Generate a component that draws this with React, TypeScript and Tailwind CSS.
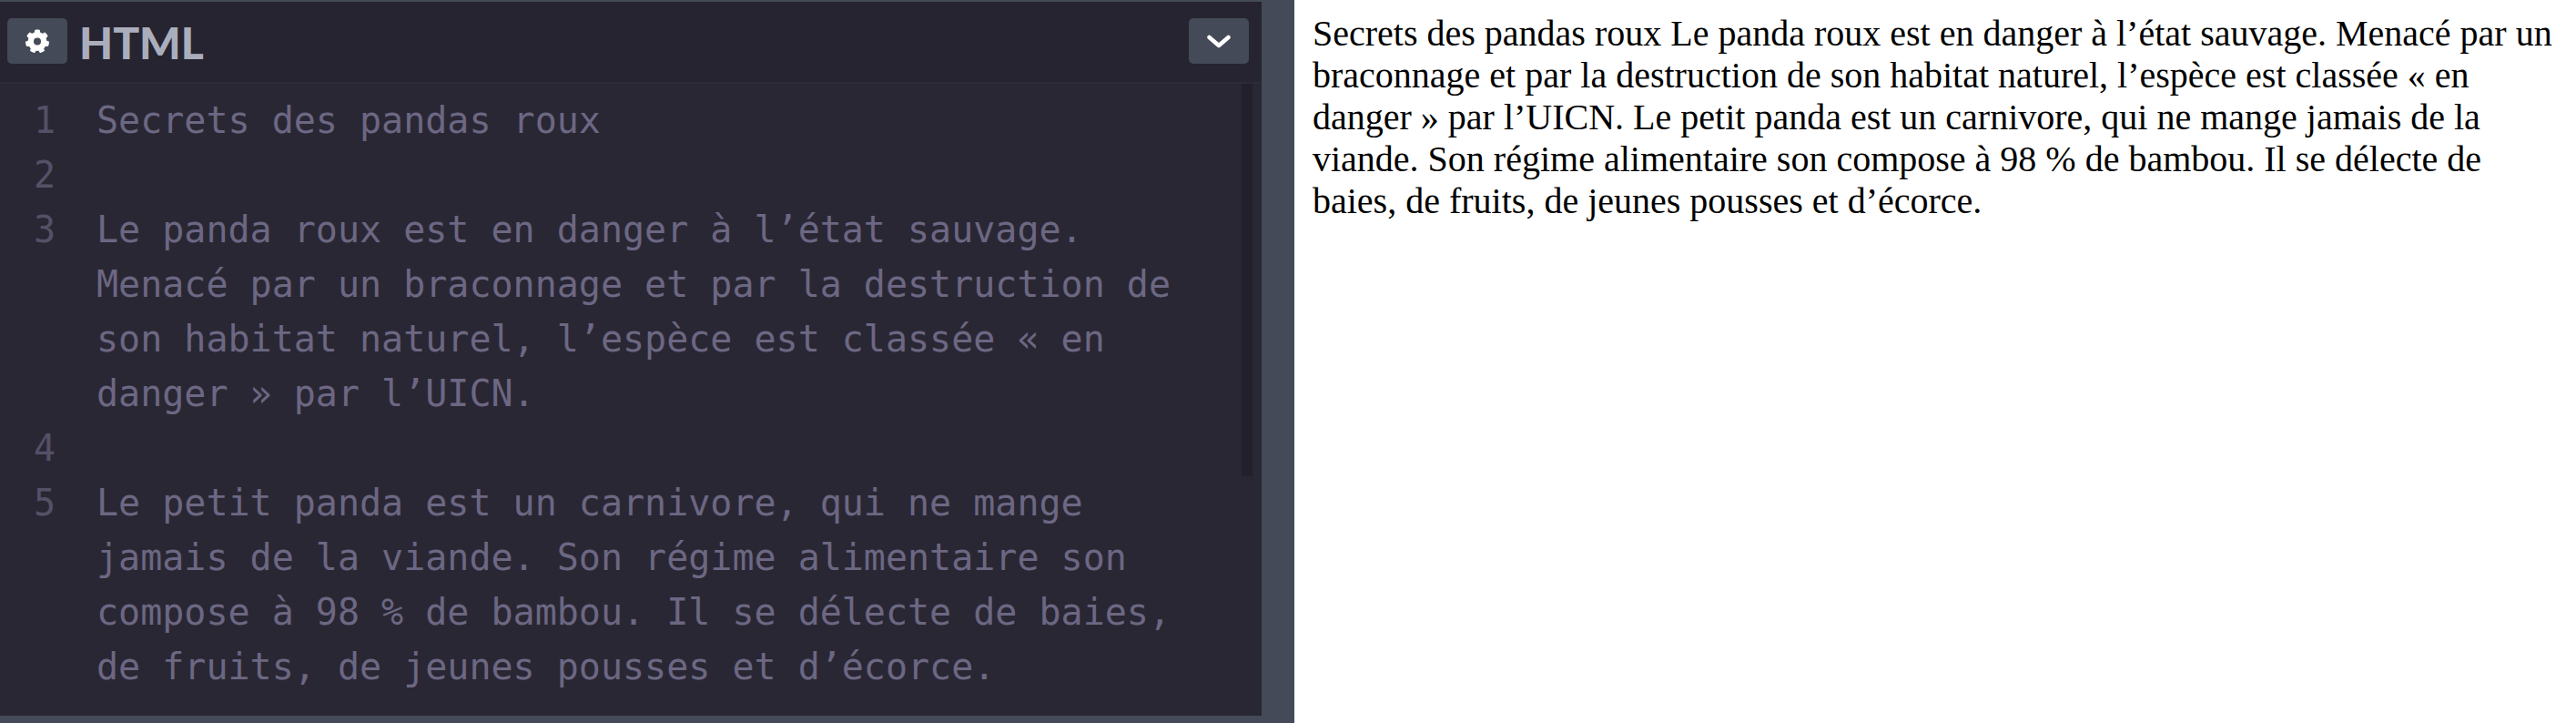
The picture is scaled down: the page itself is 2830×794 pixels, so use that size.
import { useState } from 'react';

const lines = [
  'Secrets des pandas roux',
  '',
  'Le panda roux est en danger à l’état sauvage. Menacé par un braconnage et par la destruction de son habitat naturel, l’espèce est classée «\u00a0en danger\u00a0» par l’UICN.',
  '',
  'Le petit panda est un carnivore, qui ne mange jamais de la viande. Son régime alimentaire son compose à 98\u00a0% de bambou. Il se délecte de baies, de fruits, de jeunes pousses et d’écorce.',
];

const gearTeeth = [0, 51.4, 102.9, 154.3, 205.7, 257.1, 308.6];

function GearIcon() {
  return (
    <svg viewBox="0 0 26 26" className="size-[26px]" aria-hidden="true">
      <g fill="white">
        <circle cx="13" cy="13.5" r="10.5" />
        {gearTeeth.map(a => (
          <rect key={a} x="10" y="0.5" width="6" height="6" rx="1.5" transform={`rotate(${a} 13 13.5)`} />
        ))}
      </g>
      <circle cx="13" cy="13.5" r="4" fill="#444a57" />
    </svg>
  );
}

function ChevronIcon() {
  return (
    <svg viewBox="0 0 26 16" className="h-4 w-[26px]" fill="none" stroke="white" strokeWidth="4.5" strokeLinecap="round" strokeLinejoin="round" aria-hidden="true">
      <path d="M2.5 4 L13 13 L23.5 4" />
    </svg>
  );
}

function EditorHeader() {
  const buttonClass = 'flex h-[50px] w-[66px] items-center justify-center rounded-[5px] bg-[#444a57]';
  return (
    <header className="flex h-[90px] items-center border-b-2 border-[#2d2b37] bg-[#262430] pb-0.5 pl-2 pr-[14px]">
      <button type="button" aria-label="Settings" className={buttonClass}>
        <GearIcon />
      </button>
      <h2 className="ml-[13px] pt-1 font-['Lato',sans-serif] text-[48px] leading-[60px] font-black text-[#aaaebc]">HTML</h2>
      <button type="button" aria-label="Editor menu" className={`${buttonClass} ml-auto`}>
        <ChevronIcon />
      </button>
    </header>
  );
}

export default function App() {
  const [source] = useState(lines);

  return (
    <div className="grid min-h-screen grid-cols-[1386fr_36px_1408fr] bg-white">
      <section className="flex flex-col border-t-2 border-b-8 border-[#444a57] bg-[#2a2734]">
        <EditorHeader />
        <div className="flex grow items-start pr-[10px]">
          <ol className="grow pt-[10px] pr-8 font-['DejaVu_Sans_Mono',monospace] text-[40px] leading-[60px] text-[#6c6783]">
            {source.map((line, i) => (
              <li key={i} className="flex">
                <span className="w-[61px] shrink-0 text-right text-[#545167]">{i + 1}</span>
                <span className="ml-[45px] min-w-0">{line}</span>
              </li>
            ))}
          </ol>
          <div className="h-[431px] w-3 shrink-0 bg-[#22202a]" />
        </div>
      </section>
      <div className="bg-[#444a57]" />
      <main className="px-5 pt-[14px]">
        <p className="font-['Liberation_Serif',serif] text-[40px] leading-[46px] text-black">{source.filter(Boolean).join(' ')}</p>
      </main>
    </div>
  );
}
